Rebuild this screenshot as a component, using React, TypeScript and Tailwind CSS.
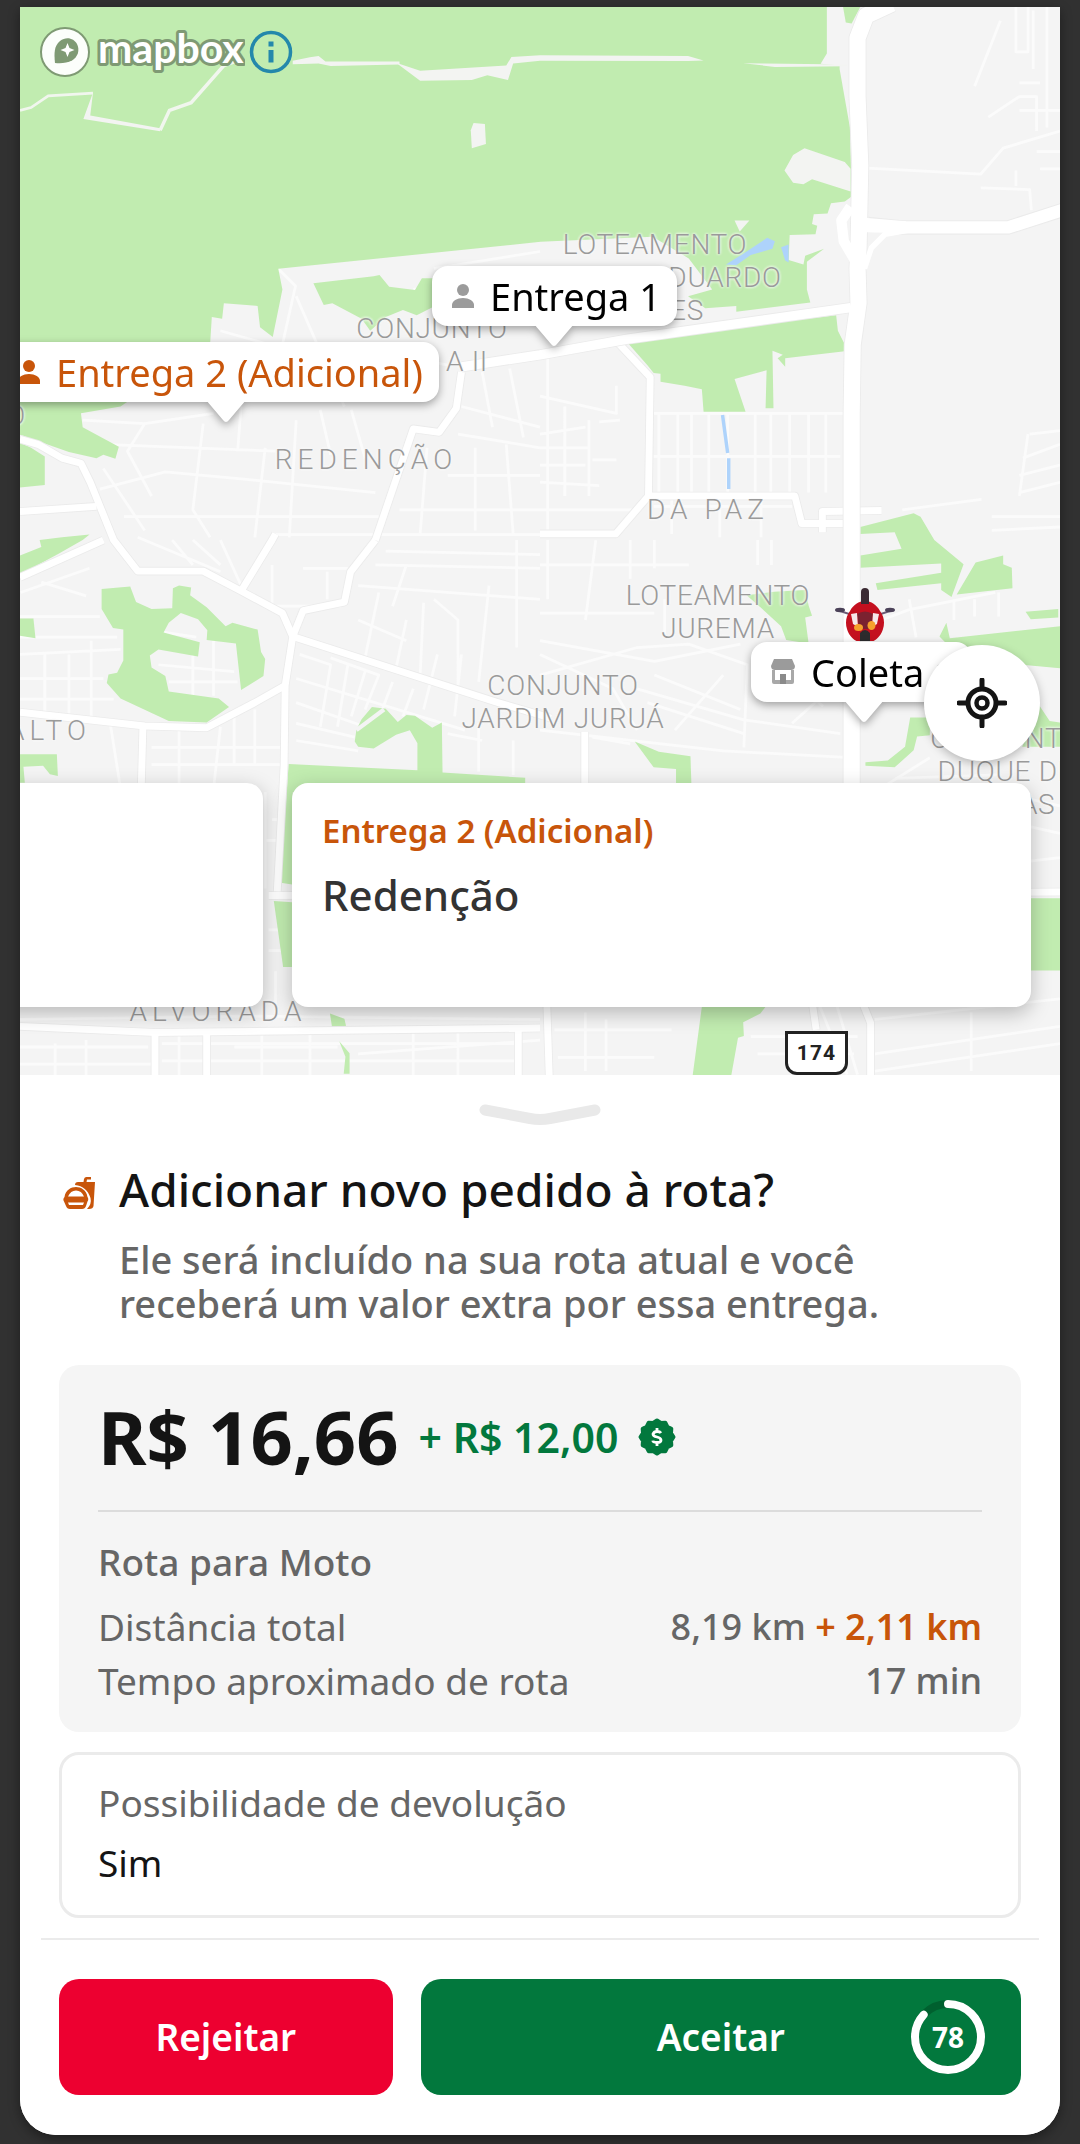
import type { ReactNode } from "react";

const PARKS = [
  // north reserve
  "M58 20H2401V155L2383 185L2438 190V200L2468 370L2473 570L2453 585L2413 590L2403 620L2363 622L2358 650L2373 655L2368 680L2293 682L2290 755L2333 768L2338 742L2393 722L2343 760V840L2353 878L2138 905V888L2048 895L1998 860L2068 840L2000 750L1900 690L1905 658H2008V682L1570 702L808 780L820 840L792 978L755 950L748 888L650 880L645 925L615 920L610 1000L350 1180L235 1200L240 1240L345 1297L335 1332L300 1320L280 1330L200 1312L58 1262Z",
  "M58 1285L90 1300L130 1325V1408L58 1415Z",
  "M58 1613L120 1588L115 1568L180 1560L260 1552L240 1568L170 1608L58 1668Z",
  "M910 822L1085 802L1102 798L1130 832L1205 842L1225 808H1290V885L1260 890L1210 915L1170 900L1120 920L1075 960L1050 925L965 880L940 885Z",
  "M2448 20H2498L2473 68L2456 65Z",
  "M1818 990L2428 915L2433 960L2453 1000V1020L2280 1040V1065L2258 1040L2273 1030L2243 1018L2246 1185H2223L2226 1075L2133 1100L2165 1195H2043L2038 1130L1988 1120L1918 1108V1085L1898 1083L1880 1060Z",
  "M2498 1530L2653 1490L2673 1500L2713 1568L2798 1638L2763 1733L2733 1713V1693L2548 1713L2543 1693L2733 1663V1636L2498 1648V1613L2618 1593L2598 1545L2498 1550Z",
  // west
  "M58 1796H97L103 1853L58 1846Z",
  "M295 1710L378 1703L395 1748L440 1768L500 1766L502 1708L520 1700L555 1706L552 1728L600 1763L655 1818L675 1808L748 1828L758 1893L770 1913L765 1963L700 2003L685 1868L600 1858L602 1830L575 1798L525 1780L490 1808L475 1836L580 1865L575 1906L460 1886L435 1903L440 1938L480 1963L490 2008L635 2028L665 2053L600 2098L490 2093L350 2028L310 1983L315 1958L340 1953L358 1918V1828L328 1823L295 1768Z",
  "M58 2190H165L168 2253L145 2248L125 2223L68 2226L72 2273H58Z",
  "M1035 2118L1050 2088L1080 2053L1120 2058L1155 2096L1180 2076L1205 2078L1255 2113L1283 2098L1285 2243L1525 2258V2300H850L848 2568L815 2563L838 2218L1212 2236V2158L1190 2120L1150 2133L1085 2173L1040 2168L1030 2153Z",
  "M795 2616L848 2620V2808H822Z",
  "M958 2943L1000 2958L1008 2993L965 2988Z",
  "M985 3023L1015 3058V3118H998L1003 3068Z",
  // east
  "M2833 1633L2913 1613V1638L2938 1648L2940 1708L2778 1726Z",
  "M2168 1728L2248 1718L2338 1713L2348 1758L2358 1788L2338 1793L2348 1868L2283 1858L2268 1818L2208 1763Z",
  "M2728 1848L2748 1808L2758 1853L3078 1818V1940L2968 1930L2868 1890L2748 1868Z",
  "M2978 1776L3073 1768V1793L2993 1798Z",
  "M2513 2213L2578 2208L2628 2168L2643 2083H2700V2135L2663 2138L2653 2178L2598 2228L2513 2223Z",
  "M3018 2048L3048 2093L3078 2098V2168H2968Z",
  "M1843 2153L1913 2183L2005 2196L2008 2288H1963V2233L1898 2228Z",
  "M2993 2608H3078V2818H2993Z",
  "M2038 2923H2223L2208 2943L2158 2968L2160 3008L2143 3013L2123 3125H2011Z",
];

const CLEARINGS = [
  "M2278 495L2303 450L2336 430L2453 470L2470 490V556L2358 520L2333 535L2303 530Z",
  "M2133 640H2176L2148 672Z",
  "M1375 357L1408 360L1411 418L1370 430L1367 378Z",
  "M1150 182L1220 205L1470 190L1485 165L1568 160V176L1490 184L1475 232L1415 218L1370 232L1220 234Z",
  "M850 176L900 166L925 162L945 178H1160V187L960 191L925 184L850 186Z",
  "M1568 160L1998 162L2043 175L1998 177L1568 176Z",
  "M2158 183L2218 184L2400 186H2460V192L2250 194Z",
  "M270 268L262 335L465 372V381L242 345Z",
];

const MAJOR = [
  "M58 1275L110 1290L180 1330L235 1345L262 1400L330 1568L400 1658H590L700 1716L820 1780L850 1848L828 1990L825 2220L805 2588",
  "M850 1848L1440 2038L1600 2085",
  "M850 1848L880 1773L1000 1748L1018 1660L1090 1568",
  "M700 1716L790 1568L800 1550",
  "M1568 1550H1788L1883 1440L1888 1095L1790 990",
  "M1090 1568L1200 1245L1275 1255L1325 1185L1340 1080",
  "M58 2068L420 2108L600 2113L740 2040L828 1990",
  "M415 2108L410 2290",
  "M58 1676L300 1568",
  "M58 1485L280 1470",
  "M1883 1440L2308 1440L2328 1520H2460",
  "M2388 1545V1485L2560 1482",
  "M1698 2125V2300",
  "M58 2980L450 2998L1568 2985",
  "M450 2998V3130M600 2998V3130M1505 2990V3130M1588 2920L1595 3130",
  "M2508 2920L2528 2970V3130M2360 2920L2370 2990",
  "M780 2600L3078 2590",
];

const MINOR = [
  "M808 780L858 830L820 1000M800 1552H1568",
  "M240 1220L420 1230L620 1200M300 1290L560 1300L800 1310M290 1420L480 1370L700 1390L1090 1430M590 1230L560 1480L610 1560M420 1230L370 1310L440 1440M700 1180L690 1310M770 1300L740 1560M930 1190L960 1320M1020 1190L1060 1330",
  "M360 1500L1100 1500M300 1360L420 1540M860 1220L840 1560M1160 1480H1568M1240 1300L1220 1550M1340 1180L1568 1240M1330 1260L1568 1300M1300 1380H1568M1400 1080L1430 1240M1480 1070L1520 1270M1380 1300V1540M1470 1290L1490 1550",
  "M1200 840L1568 790M1260 780L1568 730M1350 800V860M860 860L1000 1180M640 960L780 1000M1000 1000L1300 1060",
  "M1568 1150L1790 1200V1120M1568 1260L1700 1240M1568 1300H1710M1568 1350H1700M1568 1400L1740 1410M1710 1220V1440M1590 1040V1540M1740 1225L1800 1220M1720 1335H1790M1568 1480H1850M1640 1180V1440",
  "M1913 1200V1430M1968 1200V1430M2008 1200V1430M2058 1200V1430M2113 1200V1430M2193 1200V1430M2238 1200V1430M2293 1200V1430M2348 1200V1430M2398 1200V1430M1898 1200H2450M1898 1325H2440",
  "M1898 1470H2300M1950 1440V1550M2090 1440V1560M2210 1450V1560",
  "M2518 488L2848 505L2913 430L3078 380M2848 545L2990 550L2995 610M2950 495V540M3000 30V200M2950 20V150H2985V20M2830 250L2905 60M2870 340L2960 280H3010V380M2960 320H3078M3040 20V370M2960 240H3020M3010 440H3078M3020 490H3078",
  "M2990 1260L3078 1250M2970 1330L3078 1290M2960 1380L3078 1350M2960 1430L3078 1400M2880 1500H3078M2880 1540L3078 1530M2620 1480L2850 1450M2985 1260L2960 1440",
  "M400 1560L640 1660M640 1568L700 1700M560 1568L640 1640M500 1568L560 1640M790 1640V1760M790 1760H990M950 1660V1740M880 1650H1010",
  "M58 1790H290M58 1850L340 1850M58 1900L350 1885M130 1900V2080M200 1900V2090M265 1860V2080M58 1970H300M58 2030H330M120 1690L250 1730M60 1720L260 1650",
  "M440 1830L570 1850M460 1930L680 1950M560 1880V2020M620 1860V2020M490 1980H690",
  "M870 1900L960 1930L930 2110M960 1910L1100 1960L1060 2060M1010 1930L980 2110M1060 1950L1020 2080M1140 1980L1110 2060M1200 2000L1170 2080M1270 1900L1230 2060M1340 1900L1320 2080M860 1970L1350 2120M860 2040L1060 2110M1180 1800L1150 1940M1100 1720L1060 1910M1230 1750L1220 1960M1260 1740L1330 1800V1990M1420 1700L1390 1980",
  "M1090 1640L1568 1650M1120 1600L1568 1610M1500 1568V1880M1040 1700L1568 1740M1180 1640L1140 1760M1040 1800L1180 1860",
  "M440 2170H820M440 2220H820M520 2120V2290M680 2080V2220M740 2060V2220M640 2110L620 2290M320 2100L350 2290M860 2150L1040 2180M860 2100L1030 2140M1390 2100V2240M1490 2150V2250M1300 2130L1400 2150",
  "M770 2300V2580M790 2380H820M770 2440H820M780 2700H830M780 2760H830M800 2820V2920",
  "M58 3040H430M58 3090H440M250 3020V3130M160 3030V3130M470 3030H1500M470 3080H1500M520 2998V3130M760 3000V3130M680 3040H980M900 2990V3130M1040 3060L1568 3020M1200 2990V3130M1330 2990V3130M58 2960L700 2950L1568 2960",
  "M1568 1640H2000M1590 1568V1740M1730 1568L1700 1800M1830 1568V1680M1900 1568V1650M2200 1568V1640M2240 1568V1640M1568 1780H1900M1930 1740V1840M1568 1860L1900 1920L2150 1870M1568 1960L1850 1880L2000 1870L2170 1930L2160 2170M1900 1960L2150 2060M1850 2000L2160 2090M1880 2040L2160 2130M1568 1900L1780 2000L1850 2120M2100 1960L1960 2120M1568 2120L2100 2180L2470 2200M1720 2140L1830 2160M2160 2090L2440 2130M2260 1950L2390 2050M2300 2100L2400 2010",
  "M2640 1770L2890 1720M2560 1800L2640 1770M2640 1740L2660 1850M2770 1740V1800M2830 1740V1790M2900 1720V1790M2900 2100H3078M2600 2260L2900 2250M2540 2300L2700 2200M2990 2400L3078 2420M2990 2500L3078 2490M2990 2320L3078 2340",
  "M1610 2990H1950M1700 2940V3110M1760 2960V3110M1620 3070H1900M2180 3010H2490M2200 3060H2480M2540 2960L3078 2900M2540 3060L3078 2980M2540 3110L3078 3030M2820 2940V3110M2430 2920L2490 3120M2380 2920L2460 3120",
];

const PLACES = [
  { name: "LOTEAMENTO", place: "left-[635px] top-[238px]", spacing: "tracking-wide" },
  { name: "DUARDO", place: "left-[705px] top-[271px]", spacing: "tracking-wide" },
  { name: "ES", place: "left-[667px] top-[304px]", spacing: "tracking-wide" },
  { name: "CONJUNTO", place: "left-[412px] top-[322px]", spacing: "tracking-wide" },
  { name: "A II", place: "left-[447px] top-[355px]", spacing: "tracking-wide" },
  { name: "O", place: "left-[-4px] top-[409px]", spacing: "tracking-wide" },
  { name: "REDENÇÃO", place: "left-[346px] top-[453px]", spacing: "tracking-[5px]" },
  { name: "DA PAZ", place: "left-[688px] top-[503px]", spacing: "tracking-[5px]" },
  { name: "LOTEAMENTO", place: "left-[698px] top-[589px]", spacing: "tracking-wide" },
  { name: "JUREMA", place: "left-[698px] top-[622px]", spacing: "tracking-wide" },
  { name: "CONJUNTO", place: "left-[543px] top-[679px]", spacing: "tracking-wide" },
  { name: "JARDIM JURUÁ", place: "left-[543px] top-[712px]", spacing: "tracking-wide" },
  { name: "ALTO", place: "left-[29px] top-[724px]", spacing: "tracking-[5px]" },
  { name: "CONJUNTO", place: "left-[986px] top-[732px]", spacing: "tracking-wide" },
  { name: "DUQUE DE", place: "left-[986px] top-[765px]", spacing: "tracking-wide" },
  { name: "CAXIAS", place: "left-[986px] top-[798px]", spacing: "tracking-wide" },
  { name: "ALVORADA", place: "left-[198px] top-[1005px]", spacing: "tracking-[5px]" },
];

const MapCanvas = () => (
  <svg
    className="absolute inset-0 h-full w-full"
    viewBox="58 20 3020 3104"
    preserveAspectRatio="xMidYMin slice"
    aria-hidden="true"
  >
    <rect x="0" y="0" width="3136" height="3136" fill="#f4f4f4" />
    <g fill="none" stroke="#fbfbfb" strokeWidth="8" strokeLinejoin="round">
      {MINOR.map((d) => (
        <path key={d} d={d} />
      ))}
    </g>
    <g fill="#c1ecb0">
      {PARKS.map((d) => (
        <path key={d} d={d} />
      ))}
    </g>
    <g fill="#f3f4f2">
      {CLEARINGS.map((d) => (
        <path key={d} d={d} />
      ))}
    </g>
    <g fill="none" stroke="#f1f6ee" strokeWidth="8">
      <path d="M58 320L90 312L140 278L270 270" />
      <path d="M465 378L492 320L555 298L650 190L700 172" strokeWidth="10" />
      <path d="M1035 2120L1115 2060" stroke="#f4f4f4" strokeWidth="12" />
    </g>
    <g fill="#aed3fb">
      <path d="M2108 768L2168 730L2228 690L2250 700L2243 722L2180 740L2138 770Z" />
      <path d="M2268 718L2290 710V762L2280 756Z" />
    </g>
    <path d="M2098 1205L2113 1315M2116 1330V1420" fill="none" stroke="#aed3fb" strokeWidth="10" />
    <g fill="none" strokeLinejoin="round">
      {MAJOR.map((d) => (
        <path key={d} d={d} stroke="#ebebeb" strokeWidth="25" />
      ))}
      {MAJOR.map((d) => (
        <path key={d} d={d} stroke="#ffffff" strokeWidth="20" />
      ))}
      <g stroke="#ebebeb">
        <path d="M1340 1065L1568 1030L1818 985L2470 893" strokeWidth="32" />
        <path d="M2520 650L2618 660H2928L3090 608" strokeWidth="42" />
        <path d="M2590 10L2515 45L2490 110V280L2498 480L2493 720L2490 780L2493 880L2476 1000L2473 1200L2473 2300" strokeWidth="52" />
      </g>
      <g stroke="#ffffff">
        <path d="M1340 1065L1568 1030L1818 985L2470 893" strokeWidth="27" />
        <path d="M2470 600L2443 640L2450 700L2485 760" strokeWidth="30" />
        <path d="M2510 780L2530 720L2570 680L2640 668M2510 640L2630 650" strokeWidth="16" />
        <path d="M2480 655L2618 660H2928L3090 608" strokeWidth="36" />
        <path d="M2590 10L2515 45L2490 110V280L2498 480L2493 720L2490 780L2493 880L2476 1000L2473 1200L2473 2300" strokeWidth="47" />
      </g>
    </g>
  </svg>
);

const MapboxLogo = () => (
  <svg className="h-14 w-52" viewBox="0 0 208 56" role="img" aria-label="mapbox">
    <circle cx="28" cy="28" r="24" fill="#ffffff" fillOpacity="0.95" stroke="#7f9a74" strokeWidth="2" />
    <path d="M18 39C17 29 17 22 23 17C29 12 37 14 40 20C43 26 41 33 35 36.5C30 39 25 39.5 18 39Z" fill="#7f9a74" />
    <path d="M30.5 19L32.5 24L37.5 26L32.5 28L30.5 33L28.5 28L23.5 26L28.5 24Z" fill="#ffffff" />
    <text
      x="61"
      y="39"
      fill="#ffffff"
      stroke="#7f9a74"
      strokeWidth="6"
      strokeLinejoin="round"
      paintOrder="stroke"
      className="font-['Lato',sans-serif] text-[41px] font-bold"
    >
      mapbox
    </text>
  </svg>
);

const InfoIcon = () => (
  <svg className="h-11 w-11" viewBox="0 0 44 44" aria-hidden="true">
    <circle cx="22" cy="22" r="19.5" fill="none" stroke="#2488ab" strokeWidth="3.5" />
    <rect x="19.5" y="11.5" width="5" height="5" fill="#2488ab" />
    <rect x="19.5" y="20" width="5" height="12.5" fill="#2488ab" />
  </svg>
);

const PersonIcon = () => (
  <svg className="h-6 w-[22px]" viewBox="0 0 22 24" fill="currentColor" aria-hidden="true">
    <circle cx="11" cy="6" r="6" />
    <path d="M0 24V21C0 17 5 14 11 14S22 17 22 21V24Z" />
  </svg>
);

const StoreIcon = () => (
  <svg className="h-[26px] w-6" viewBox="0 0 24 26" aria-hidden="true">
    <path d="M3 0H21L24 7C24 10 22 11 20 11H4C2 11 0 10 0 7Z" fill="#9b9b9b" />
    <path d="M1 11H4V21H9V16H15V21H20V11H23V23Q23 25 21 25H3Q1 25 1 23Z" fill="#a8a8a8" />
    <path d="M9 15H15V25H9Z" fill="#8a8a8a" />
  </svg>
);

const MotoIcon = () => (
  <svg className="h-[54px] w-[60px]" viewBox="0 0 60 54" aria-hidden="true">
    <path d="M2 23L14 27L25 22M58 23L46 27L35 22" fill="none" stroke="#6b5a75" strokeWidth="2" />
    <ellipse cx="5" cy="23" rx="5" ry="2.2" fill="#4b4158" />
    <ellipse cx="55" cy="23" rx="5" ry="2.2" fill="#4b4158" />
    <path d="M15 24C18 18 24 14 30 14S42 18 45 24C49 29 50 36 48 42C46 49 40 56 30 56S14 49 12 42C10 36 11 29 15 24Z" fill="#c4101f" />
    <path d="M26 17V5Q26 1 30 1T34 5V17Z" fill="#3b2a33" />
    <path d="M22 27Q30 22 38 27L36 42H24Z" fill="#7b2230" />
    <path d="M16 27L22 26L23 40L18 37Z" fill="#f6e9ea" />
    <path d="M44 27L38 26L37 40L42 37Z" fill="#f6e9ea" />
    <ellipse cx="23.5" cy="40.5" rx="4.5" ry="3.5" fill="#f6a02c" />
    <ellipse cx="36.5" cy="38.5" rx="4" ry="4.5" fill="#f6a02c" />
    <path d="M25 46Q30 40 35 46V56H25Z" fill="#2c2b2d" />
  </svg>
);

const FoodIcon = () => (
  <svg className="h-8 w-8 text-[#c8550a]" viewBox="0 0 32 32" fill="currentColor" aria-hidden="true">
    <path d="M12 8Q12 5 15 5H20.5L21 2Q21.5 0 23.5 0H28V2.5H24L23.5 5H32L30.5 29Q30 32 26 32H24Q29 27 27.5 21C25 13 20 9 12 8Z" />
    <path d="M1.5 20C2.5 13 8 10 13 10S23.5 13 24.5 20Q26 22 24.5 24.5L23 29Q22 32 19 32H7Q4 32 3 29L1 24.5Q-0.5 22 1.5 20Z" />
    <path d="M5 19.5Q7.5 13.5 13 13.5T21 19.5Z" fill="#ffffff" />
    <path d="M5 25.5H21L20 28H6Z" fill="#ffffff" />
  </svg>
);

// twelve-point seal, alternating between the outer and the inner radius
const SEAL_POINTS = Array.from({ length: 24 }, (_, i) => {
  const radius = i % 2 === 0 ? 16.5 : 14.5;
  const angle = (i * Math.PI) / 12;
  return `${(radius * Math.cos(angle)).toFixed(1)},${(radius * Math.sin(angle)).toFixed(1)}`;
}).join(" ");

const BonusIcon = () => (
  <svg className="h-[38px] w-[38px]" viewBox="-19 -19 38 38" aria-hidden="true">
    <polygon points={SEAL_POINTS} fill="#02783d" stroke="#02783d" strokeWidth="4" strokeLinejoin="round" />
    <path
      d="M4 -4Q3 -5.5 0 -5.5T-4 -3Q-4 -0.8 0 0T4 3.2Q4 5.5 0 5.5T-4.2 3.7M0 -9V-5.5M0 5.5V9"
      fill="none"
      stroke="#ffffff"
      strokeWidth="2.8"
    />
  </svg>
);

const LocateIcon = () => (
  <svg className="h-[50px] w-[50px]" viewBox="0 0 50 50" fill="none" stroke="#141414" aria-hidden="true">
    <circle cx="25" cy="25" r="14" strokeWidth="5" />
    <circle cx="25" cy="25" r="5.5" strokeWidth="4.5" />
    <path d="M25 2V10M25 40V48M2 25H10M40 25H48" strokeWidth="5" strokeLinecap="round" />
  </svg>
);

const Pin = ({ place, tail, children }: { place: string; tail: string; children: ReactNode }) => (
  <div className={`absolute drop-shadow-[0_3px_4px_rgba(0,0,0,0.35)] ${place}`}>
    <div className="flex h-[60px] items-center gap-4 rounded-2xl bg-white pr-4 pl-5 text-[38px] leading-[44px] whitespace-nowrap">
      {children}
    </div>
    <svg className={`absolute top-[58px] h-6 w-12 ${tail}`} viewBox="0 0 48 24" aria-hidden="true">
      <path d="M4 0H44L27 20Q24 24 21 20Z" fill="#ffffff" />
    </svg>
  </div>
);

const Countdown = ({ seconds, total }: { seconds: number; total: number }) => {
  const length = 2 * Math.PI * 33;
  return (
    <span className="absolute right-9 grid size-[74px] place-items-center">
      <svg className="col-start-1 row-start-1 -rotate-90" viewBox="0 0 74 74" fill="none" aria-hidden="true">
        <circle cx="37" cy="37" r="33" stroke="#00602f" strokeWidth="8" />
        <circle
          cx="37"
          cy="37"
          r="33"
          stroke="#ffffff"
          strokeWidth="8"
          strokeLinecap="round"
          strokeDasharray={`${(length * seconds) / total} ${length}`}
        />
      </svg>
      <span className="col-start-1 row-start-1 text-[28px] leading-8 font-bold">{seconds}</span>
    </span>
  );
};

const App = () => {
  return (
    <div className="flex min-h-screen flex-col bg-[#313131] px-5 pt-[7px] pb-[9px] font-['Noto_Sans',sans-serif]">
      <main className="flex flex-1 flex-col overflow-hidden rounded-b-[36px] bg-white shadow-[0_4px_12px_rgba(0,0,0,0.4)]">
        <section className="relative min-h-[1060px] flex-1 overflow-hidden" aria-label="Mapa da rota">
          <MapCanvas />

          {PLACES.map((p) => (
            <span
              key={p.place}
              className={`absolute -translate-x-1/2 -translate-y-1/2 font-['Roboto',sans-serif] text-[28px] leading-8 font-light whitespace-nowrap text-[#9a9a9a] [text-shadow:0_0_3px_#f8f8f8,0_0_3px_#f8f8f8] ${p.place} ${p.spacing}`}
            >
              {p.name}
            </span>
          ))}

          <div className="absolute bottom-0 left-[765px] flex h-11 w-[63px] items-center justify-center rounded-b-xl border-[3px] border-[#222222] bg-white font-['Roboto',sans-serif] text-[21px] leading-6 font-bold tracking-wider text-[#222222]">
            174
          </div>

          <div className="absolute top-[17px] left-[17px] flex items-center gap-1">
            <MapboxLogo />
            <a href="#atribuicao" aria-label="Informações do mapa">
              <InfoIcon />
            </a>
          </div>

          <div className="absolute top-[580px] left-[815px]">
            <MotoIcon />
          </div>

          <Pin place="top-[259px] left-[412px]" tail="left-[98px]">
            <span className="text-[#9b9b9b]">
              <PersonIcon />
            </span>
            Entrega 1
          </Pin>
          <Pin place="top-[335px] left-[-22px] text-[#c8550a]" tail="left-[204px]">
            <PersonIcon />
            Entrega 2 (Adicional)
          </Pin>
          <Pin place="top-[635px] left-[731px]" tail="left-[89px]">
            <StoreIcon />
            Coleta 1
          </Pin>

          <div className="absolute inset-x-0 bottom-[68px] flex flex-col gap-[22px]">
            <button
              type="button"
              aria-label="Centralizar no mapa"
              className="mr-5 grid size-[116px] place-items-center self-end rounded-full bg-white shadow-[0_3px_10px_rgba(0,0,0,0.25)]"
            >
              <LocateIcon />
            </button>
            <div className="flex justify-end gap-[29px] pr-[29px]">
              <article className="h-56 w-[739px] shrink-0 rounded-2xl bg-white shadow-[0_6px_20px_rgba(0,0,0,0.25)]" />
              <article className="h-56 w-[739px] shrink-0 rounded-2xl bg-white px-[30px] pt-7 shadow-[0_6px_20px_rgba(0,0,0,0.25)]">
                <h2 className="text-[33px] leading-10 font-semibold text-[#c8550a]">Entrega 2 (Adicional)</h2>
                <p className="mt-[18px] text-[42px] leading-[52px] font-medium text-[#333333]">Redenção</p>
              </article>
            </div>
          </div>
        </section>

        <section className="bg-white px-[39px] pt-7 pb-10">
          <svg className="mx-auto h-6 w-[122px]" viewBox="0 0 122 24" fill="none" aria-hidden="true">
            <path d="M6 7L51 15.5Q61 17.5 71 15.5L116 7" stroke="#e9e9e9" strokeWidth="11" strokeLinecap="round" />
          </svg>

          <div className="mt-[34px] flex">
            <div className="w-[60px] pt-4 pl-1">
              <FoodIcon />
            </div>
            <div className="flex-1">
              <h1 className="text-[46px] leading-[56px] font-medium text-[#141414]">Adicionar novo pedido à rota?</h1>
              <p className="mt-5 max-w-[800px] text-[38px] leading-[44px] font-medium text-[#666666]">
                Ele será incluído na sua rota atual e você receberá um valor extra por essa entrega.
              </p>
            </div>
          </div>

          <div className="mt-10 rounded-[20px] bg-[#f5f5f5] px-[39px] pt-8 pb-6 text-[37px] text-[#666666]">
            <div className="flex items-center gap-5">
              <strong className="text-[74px] leading-[80px] font-bold text-[#141414]">R$ 16,66</strong>
              <span className="text-[41px] leading-[52px] font-semibold text-[#02783d]">+ R$ 12,00</span>
              <BonusIcon />
            </div>
            <hr className="mt-[33px] mb-7 border-t-2 border-[#dcdcdc]" />
            <h2 className="mb-4 leading-[44px] font-medium">Rota para Moto</h2>
            <dl className="leading-[54px]">
              <div className="flex justify-between">
                <dt>Distância total</dt>
                <dd className="text-[36px] font-medium">
                  8,19 km <span className="font-semibold text-[#c8550a]">+ 2,11 km</span>
                </dd>
              </div>
              <div className="flex justify-between">
                <dt>Tempo aproximado de rota</dt>
                <dd className="text-[36px] font-medium">17 min</dd>
              </div>
            </dl>
          </div>

          <dl className="mt-5 rounded-[20px] border-[3px] border-[#ebebeb] px-9 pt-[26px] pb-[30px] text-[37px] leading-[44px]">
            <dt className="text-[#666666]">Possibilidade de devolução</dt>
            <dd className="mt-4 text-[#141414]">Sim</dd>
          </dl>

          <hr className="-mx-[18px] mt-5 mb-[39px] border-t-2 border-[#ebebeb]" />

          <div className="flex gap-7 text-[37px] leading-[44px] font-semibold text-white">
            <button type="button" className="h-[116px] flex-[5] rounded-[20px] bg-[#ed0030]">
              Rejeitar
            </button>
            <button
              type="button"
              className="relative flex h-[116px] flex-[9] items-center justify-center rounded-[20px] bg-[#02783d]"
            >
              Aceitar
              <Countdown seconds={78} total={90} />
            </button>
          </div>
        </section>
      </main>
    </div>
  );
};

export default App;
